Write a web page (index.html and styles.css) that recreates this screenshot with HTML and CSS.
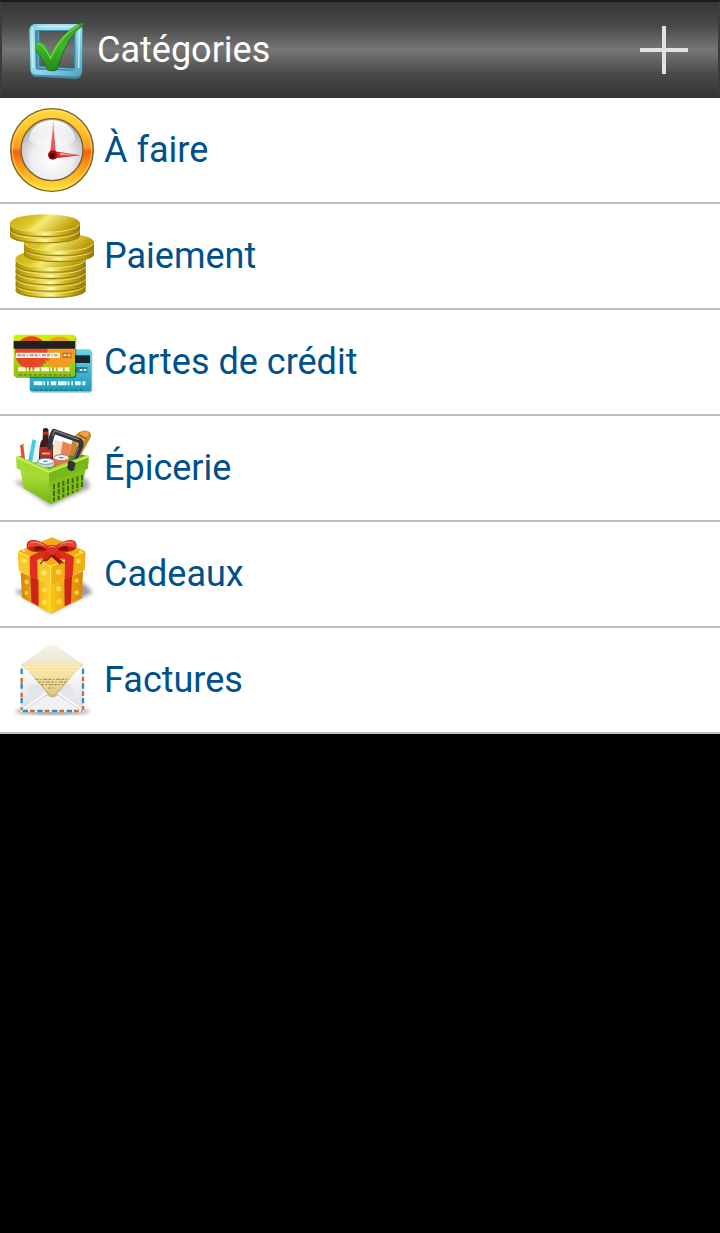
FILE: index.html
```html
<!DOCTYPE html>
<html lang="fr">
    <head>
        <meta charset="utf-8" />
        <meta name="viewport" content="width=device-width, initial-scale=1" />

        <title>Catégories</title>

        <link rel="stylesheet" href="styles.css">
    </head>

    <body>
        <header class="top-bar">
            <svg class="logo" viewBox="21 21 180 180" aria-hidden="true">
                <defs>
                    <linearGradient id="frame" x1="0" y1="0" x2="1" y2="1">
                        <stop offset="0" stop-color="#7fcfe3" />
                        <stop offset=".25" stop-color="#a9e2f0" />
                        <stop offset=".6" stop-color="#8ad2ec" />
                        <stop offset="1" stop-color="#4ea0c0" />
                    </linearGradient>
                    <linearGradient id="tick" x1="0" y1="0" x2="0" y2="1">
                        <stop offset="0" stop-color="#2f9a28" />
                        <stop offset=".5" stop-color="#3fb52c" />
                        <stop offset="1" stop-color="#238a1c" />
                    </linearGradient>
                </defs>
                <path fill="#3f8daa" fill-rule="evenodd" d="M42 34H172Q188 36 187 50V176Q185 194 168 197L44 191Q34 188 32 178L28 52Q28 38 42 34ZM56 54V160L162 166V54Z" />
                <path fill="url(#frame)" fill-rule="evenodd" d="M44 33L172 33Q187 35 187 49L186 170Q184 190 166 190L48 185Q33 184 32 170L28 54Q28 37 44 33ZM48 51Q45 52 45 57L47 164Q47 169 53 170L158 174Q166 174 166 166L167 58Q167 51 160 51Z" />
                <path fill="none" stroke="#5db8d2" stroke-width="3" d="M56 54V162L163 169" />
                <path fill="none" stroke="#c9eff8" stroke-width="4" d="M38 44Q36 48 36 56L39 165M52 41H170M178 50L176 165" />
                <path fill="#176c18" d="M46 96Q54 86 66 92Q80 102 92 128Q116 68 176 34L192 30L188 40Q146 64 112 170Q98 178 82 172Q66 134 46 112Z" />
                <path fill="url(#tick)" d="M45 94Q56 84 68 90Q80 98 92 123Q120 64 174 34L188 29Q192 32 188 38Q140 70 111 165Q104 176 82 170Q68 132 45 108Z" />
                <path fill="none" stroke="#7ad34e" stroke-width="4" stroke-linecap="round" d="M53 94Q67 89 92 136Q120 70 176 38" />
            </svg>
            <h1 class="title">Catégories</h1>
            <button class="add" type="button" aria-label="Ajouter">
                <svg class="plus" viewBox="0 0 48 48" aria-hidden="true">
                    <path fill="#e2e2e2" d="M22 0h4v22h22v4H26v22h-4V26H0v-4h22Z" />
                </svg>
            </button>
        </header>

        <main>
            <ul class="categories">
                <li>
                    <a class="category" href="#a-faire">
                        <!-- Clock -->
                        <svg class="icon" viewBox="30 30 252 252" aria-hidden="true">
                            <defs>
                                <linearGradient id="rim" x1="0" y1="0" x2="0" y2="1">
                                    <stop offset="0" stop-color="#ffd83c" />
                                    <stop offset=".25" stop-color="#ffc42a" />
                                    <stop offset=".47" stop-color="#fb9a20" />
                                    <stop offset=".52" stop-color="#f4600c" />
                                    <stop offset=".7" stop-color="#fb9a18" />
                                    <stop offset="1" stop-color="#ffe83c" />
                                </linearGradient>
                                <radialGradient id="face" cx=".5" cy=".65" r=".6">
                                    <stop offset="0" stop-color="#fff" />
                                    <stop offset=".55" stop-color="#eeeef0" />
                                    <stop offset="1" stop-color="#b4b4b8" />
                                </radialGradient>
                                <linearGradient id="shine" x1="0" y1="0" x2="0" y2="1">
                                    <stop offset="0" stop-color="#fff" />
                                    <stop offset="1" stop-color="#fff" stop-opacity=".3" />
                                </linearGradient>
                            </defs>
                            <circle cx="156" cy="156" r="124" fill="url(#rim)" stroke="#806420" stroke-width="4" />
                            <circle cx="156" cy="156" r="119" fill="none" stroke="#ffe680" stroke-width="3" opacity=".7" />
                            <circle cx="156" cy="155" r="93" fill="url(#face)" stroke="#76602c" stroke-width="4" />
                            <path fill="url(#shine)" d="M87 126Q92 72 156 66Q220 72 226 126Q206 148 156 148Q106 148 87 126Z" />
                            <path fill="#e99" d="M160 66L168 168H150Z" />
                            <path fill="#e03c38" opacity=".7" d="M160 96L168 168H150Z" />
                            <path fill="#e0302c" d="M156 158L242 172L156 182Z" />
                            <path fill="#f49a94" d="M180 164L234 172L180 172Z" />
                            <circle cx="158" cy="171" r="14" fill="#a41010" />
                            <circle cx="157" cy="173" r="8" fill="#4c0808" />
                        </svg>
                        À faire
                    </a>
                </li>
                <li>
                    <a class="category" href="#paiement">
                        <!-- Stack of coins, drawn from the bottom up -->
                        <svg class="icon" viewBox="30 24 252 252" aria-hidden="true">
                            <defs>
                                <linearGradient id="edge">
                                    <stop offset="0" stop-color="#a88c08" />
                                    <stop offset=".25" stop-color="#d6c024" />
                                    <stop offset=".5" stop-color="#fff9a0" />
                                    <stop offset=".7" stop-color="#d4bb20" />
                                    <stop offset="1" stop-color="#927604" />
                                </linearGradient>
                                <linearGradient id="coin-top" x1="0" y1="0" x2="1" y2=".3">
                                    <stop offset="0" stop-color="#c6a80c" />
                                    <stop offset=".4" stop-color="#dcc628" />
                                    <stop offset=".55" stop-color="#f4ec74" />
                                    <stop offset="1" stop-color="#bd9e08" />
                                </linearGradient>
                                <g id="coin">
                                    <path fill="url(#edge)" d="M0 0V18C0 50 210 50 210 18V0Z" />
                                    <path fill="none" stroke="#a08410" stroke-width="4" d="M1 18C1 48 209 48 209 18" />
                                    <ellipse cx="105" cy="0" rx="105" ry="26" fill="url(#coin-top)" />
                                    <path fill="none" stroke="#eee070" stroke-width="3" d="M2 5C12 35 198 35 208 5" />
                                </g>
                            </defs>
                            <use href="#coin" x="47" y="234" />
                            <use href="#coin" x="47" y="215" />
                            <use href="#coin" x="47" y="196" />
                            <use href="#coin" x="47" y="177" />
                            <use href="#coin" x="47" y="158" />
                            <use href="#coin" x="72" y="126" />
                            <use href="#coin" x="72" y="108" />
                            <use href="#coin" x="30" y="70" />
                            <use href="#coin" x="30" y="51" />
                        </svg>
                        Paiement
                    </a>
                </li>
                <li>
                    <a class="category" href="#cartes-de-credit">
                        <!-- Two credit cards -->
                        <svg class="icon" viewBox="30 24 252 252" aria-hidden="true">
                            <defs>
                                <linearGradient id="lime" x1="0" y1="0" x2="0" y2="1">
                                    <stop offset="0" stop-color="#d6ec08" />
                                    <stop offset="1" stop-color="#8ec018" />
                                </linearGradient>
                                <linearGradient id="blue" x1="0" y1="0" x2="0" y2="1">
                                    <stop offset="0" stop-color="#68d4e6" />
                                    <stop offset="1" stop-color="#1c9cb8" />
                                </linearGradient>
                                <clipPath id="card">
                                    <rect x="41" y="68" width="184" height="126" rx="8" />
                                </clipPath>
                            </defs>
                            <rect x="92" y="116" width="185" height="126" rx="8" fill="#000" opacity=".25" />
                            <rect x="89" y="112" width="185" height="126" rx="8" fill="url(#blue)" />
                            <path fill="#16282c" d="M200 130h70v23h-70Z" />
                            <path fill="#287f90" d="M226 165h36v17h-36Z" />
                            <path fill="none" stroke="#d8f4f8" stroke-width="6" stroke-dasharray="8 4" d="M239 174h20" />
                            <path fill="none" stroke="#e6fbff" stroke-width="12" stroke-dasharray="26 3 5 6 5 6 17 5" d="M101 214h155" />
                            <path fill="none" stroke="#177790" stroke-width="4" stroke-dasharray="9 6" d="M104 234h150" />
                            <rect x="45" y="72" width="184" height="126" rx="8" fill="#000" opacity=".35" />
                            <rect x="41" y="68" width="184" height="126" rx="8" fill="url(#lime)" />
                            <g clip-path="url(#card)">
                                <circle cx="178" cy="122" r="48" fill="#f59b22" />
                                <circle cx="94" cy="122" r="49" fill="#e84428" />
                                <path fill="none" stroke="#e8502a" stroke-width="5" d="M110 143h38M110 152h29M110 161h19" />
                            </g>
                            <path fill="#20201e" d="M41 87h184v23H41Z" />
                            <path fill="#fff3e4" d="M47 122h133v16H47Z" />
                            <path fill="none" stroke="#a89a8c" stroke-width="6" stroke-dasharray="12 3 9 5 3 5" d="M52 130h120" />
                            <path fill="#b57830" d="M187 122h28v16h-28Z" />
                            <path fill="none" stroke="#ffe3b8" stroke-width="6" stroke-dasharray="8 4" d="M191 130h20" />
                            <path fill="none" stroke="#fff3d0" stroke-width="12" stroke-dasharray="23 4 5 6 5 6 16 5" d="M54 172h154" />
                            <path fill="none" stroke="#668c14" stroke-width="4" stroke-dasharray="9 6" d="M56 189h156" />
                        </svg>
                        Cartes de crédit
                    </a>
                </li>
                <li>
                    <a class="category" href="#epicerie">
                        <!-- Shopping basket -->
                        <svg class="icon" viewBox="30 24 252 252" aria-hidden="true">
                            <defs>
                                <linearGradient id="basket" x1="0" y1="0" x2="0" y2="1">
                                    <stop offset="0" stop-color="#b4e43c" />
                                    <stop offset="1" stop-color="#75b414" />
                                </linearGradient>
                                <filter id="soft" x="-20%" y="-50%" width="140%" height="200%">
                                    <feGaussianBlur stdDeviation="6" />
                                </filter>
                            </defs>
                            <path fill="#000" opacity=".35" filter="url(#soft)" d="M42 190L150 265L270 210L260 180Z" />
                            <path fill="#5c8c18" d="M50 119L150 78L266 116L148 165Z" />
                            <path fill="#e64c2c" d="M60 82L72 78L84 130L66 126Z" />
                            <path fill="#fff" d="M70 82L82 75L90 130H76Z" />
                            <path fill="#e4f8fc" d="M82 84L98 64L118 70L122 134L84 132Z" />
                            <path fill="#4cc4e4" d="M98 64L108 68L96 134L84 132Z" />
                            <path fill="#c8862c" d="M202 110L222 58Q236 36 262 38Q278 44 271 60L238 120Z" />
                            <path fill="#f0a648" d="M224 62Q240 38 262 40Q272 46 260 56L234 94Z" />
                            <path fill="none" stroke="#8c4e14" stroke-width="4" d="M236 50l22 12M228 64l20 12" />
                            <path fill="#f8e4cc" d="M164 66L206 74L196 124H152Z" />
                            <path fill="#ed8454" d="M188 70L218 82L204 122H180Z" />
                            <path fill="#3c1c18" d="M129 33Q137 27 145 33L146 64Q158 74 159 94V130H116L119 88Q120 72 128 64Z" />
                            <path fill="#ba3024" d="M129 41h16v9h-16ZM120 87h37v32h-37Z" />
                            <path fill="#f4b49c" d="M126 104h24v5h-24Z" />
                            <path fill="#c8d4da" d="M111 130Q136 114 162 130V144Q138 154 111 142Z" />
                            <ellipse cx="137" cy="130" rx="25" ry="9" fill="#f4f8fa" stroke="#7098ac" stroke-width="3" />
                            <path fill="#f3714a" d="M160 120Q182 104 207 120V136L164 144Z" />
                            <ellipse cx="184" cy="119" rx="23" ry="9" fill="#f8f0ec" stroke="#a47c70" stroke-width="3" />
                            <path fill="#2c98bc" d="M130 128h12v4h-12ZM178 117h12v4h-12Z" />
                            <path fill="none" stroke="#34363e" stroke-width="15" stroke-linecap="round" stroke-linejoin="round" d="M149 88Q152 55 162 40L240 68Q248 76 238 94L215 148" />
                            <path fill="none" stroke="#787a86" stroke-width="4" stroke-linecap="round" d="M158 52L164 38L236 65M235 90L216 134" />
                            <path fill="url(#basket)" d="M60 151L147 190L154 259L71 211Z" />
                            <path fill="#82bf1c" d="M147 190L257 154L244 216L154 259Z" />
                            <path fill="#a4da34" d="M48 117L56 114L146 153L260 111L266 116L264 152L147 193L50 151Z" />
                            <path fill="#78b818" d="M147 163L266 117L264 152L147 193Z" />
                            <path fill="none" stroke="#d4f468" stroke-width="4" d="M50 118L147 162L265 116" />
                            <path fill="none" stroke="#426c0c" stroke-width="6" stroke-dasharray="16 4" d="M162 198V250M176 193V245M190 188V238M204 183V232M218 179V226M232 175V220M246 171V211" />
                            <path fill="#30323a" d="M204 130Q216 124 227 136L222 157Q211 164 202 151Z" />
                        </svg>
                        Épicerie
                    </a>
                </li>
                <li>
                    <a class="category" href="#cadeaux">
                        <!-- Gift box -->
                        <svg class="icon" viewBox="30 24 252 252" aria-hidden="true">
                            <defs>
                                <linearGradient id="gold">
                                    <stop offset="0" stop-color="#d88408" />
                                    <stop offset="1" stop-color="#ffd728" />
                                </linearGradient>
                                <linearGradient id="gold-side">
                                    <stop offset="0" stop-color="#f8c818" />
                                    <stop offset="1" stop-color="#dc8404" />
                                </linearGradient>
                            </defs>
                            <path fill="#000" opacity=".4" filter="url(#soft)" d="M42 200L152 268L278 206L250 176Z" />
                            <path fill="url(#gold)" d="M62 144L153 182L154 269L66 221Z" />
                            <path fill="url(#gold-side)" d="M153 182L249 142L246 222L154 269Z" />
                            <g fill="#ffe85c" opacity=".65">
                                <circle cx="80" cy="174" r="7" />
                                <circle cx="132" cy="198" r="8" />
                                <circle cx="79" cy="207" r="6" />
                                <circle cx="132" cy="235" r="8" />
                                <circle cx="176" cy="194" r="8" />
                                <circle cx="178" cy="233" r="8" />
                                <circle cx="230" cy="170" r="7" />
                                <circle cx="230" cy="206" r="7" />
                            </g>
                            <path fill="#cc2418" d="M91 150L115 160L116 247L94 235ZM193 160L216 150L213 238L194 247Z" />
                            <path fill="#f0ac14" d="M54 82L156 40L257 82L152 132Z" />
                            <path fill="#f8c928" d="M53 82L152 125L153 183L56 140Z" />
                            <path fill="#f0b010" d="M152 125L257 80L254 139L153 183Z" />
                            <path fill="none" stroke="#fff06c" stroke-width="3" d="M54 83L152 127L256 82M152 127V180" />
                            <g fill="#fff280" opacity=".65">
                                <circle cx="73" cy="111" r="7" />
                                <circle cx="132" cy="146" r="8" />
                                <circle cx="176" cy="144" r="8" />
                                <circle cx="235" cy="112" r="7" />
                                <circle cx="72" cy="80" r="5" />
                                <circle cx="241" cy="83" r="5" />
                            </g>
                            <path fill="#df2e20" d="M89 98L132 76L150 86L112 107L113 165L90 155ZM222 98L178 76L158 86L195 106L194 166L218 156Z" />
                            <path fill="#8c140c" d="M119 119L144 91H164L194 119L182 116L181 124L168 110L154 98L142 111L128 112L124 121Z" />
                            <path fill="#d42419" d="M142 80L122 106L134 103L137 111L158 86L180 110L182 102L193 108L170 78Z" />
                            <path fill="#c81c14" d="M148 80Q122 42 91 49Q79 54 80 68Q85 84 111 84Z" />
                            <path fill="#e84430" d="M146 66Q111 43 90 51Q80 59 84 72Q104 60 146 78Z" />
                            <path fill="#84150e" d="M104 68Q122 62 142 77L114 80Q98 79 104 68Z" />
                            <path fill="#c81c14" d="M160 80Q190 42 219 49Q231 54 230 68Q225 82 199 84Z" />
                            <path fill="#e84430" d="M164 66Q200 43 221 51Q230 59 227 72Q205 60 164 78Z" />
                            <path fill="#84150e" d="M204 68Q187 62 169 77L197 80Q210 79 204 68Z" />
                            <path fill="#db3022" d="M140 67Q156 57 173 67L176 82Q157 96 139 83Z" />
                            <path fill="none" stroke="#f68c70" stroke-width="3" stroke-linecap="round" d="M93 57Q108 50 130 63M182 61Q202 50 218 57M147 69Q156 65 165 69" />
                        </svg>
                        Cadeaux
                    </a>
                </li>
                <li>
                    <a class="category" href="#factures">
                        <!-- Open envelope -->
                        <svg class="icon" viewBox="30 24 252 252" aria-hidden="true">
                            <defs>
                                <linearGradient id="flap" x1="0" y1="0" x2="0" y2="1">
                                    <stop offset="0" stop-color="#f4f2e8" />
                                    <stop offset="1" stop-color="#e8e2c8" />
                                </linearGradient>
                                <linearGradient id="letter" x1="0" y1="0" x2="0" y2="1">
                                    <stop offset="0" stop-color="#fff0b8" />
                                    <stop offset="1" stop-color="#e4c880" />
                                </linearGradient>
                                <linearGradient id="paper" x1="0" y1="0" x2="0" y2="1">
                                    <stop offset="0" stop-color="#fff" />
                                    <stop offset="1" stop-color="#dcdde2" />
                                </linearGradient>
                            </defs>
                            <ellipse cx="157" cy="244" rx="112" ry="7" fill="#000" opacity=".6" filter="url(#soft)" />
                            <path fill="url(#flap)" d="M62 104L140 50Q156 41 172 50L252 104L246 120H66Z" />
                            <path fill="url(#paper)" d="M62 105L156 190L251 105V247H62Z" />
                            <circle cx="105" cy="184" r="22" fill="#e4e5e9" />
                            <circle cx="198" cy="182" r="22" fill="#e4e5e9" />
                            <path fill="#b4b5bb" opacity=".7" d="M66 242L137 190L157 202L177 190L249 242Z" />
                            <path fill="#f1f1f4" d="M68 244L139 196Q157 207 175 196L247 244Z" />
                            <path fill="none" stroke="#fff" stroke-width="5" d="M68 239L141 189M246 239L174 189" />
                            <path fill="#c8ba90" d="M70 104H244L166 199Q157 206 148 199Z" />
                            <path fill="url(#letter)" d="M75 101H239L242 108L165 191Q157 198 149 191L72 108Z" />
                            <path fill="none" stroke="#f5dda0" stroke-width="3" d="M78 106H237M83 116H231M91 126H222" />
                            <path fill="none" stroke="#a08858" stroke-width="3" stroke-dasharray="9 4 5 5 13 3" d="M106 148H208M114 156H199M123 164H190M144 174H168" />
                            <path fill="none" stroke="#e4edf4" stroke-width="6" d="M65 110V244H249V110" />
                            <path fill="none" stroke="#2f8dca" stroke-width="7" stroke-dasharray="16 28" d="M65 116V244M249 116V244M68 243H247" />
                            <path fill="none" stroke="#d46c32" stroke-width="7" stroke-dasharray="14 30" d="M65 144V240M249 140V240M90 243H247" />
                        </svg>
                        Factures
                    </a>
                </li>
            </ul>
        </main>
    </body>
</html>
```
FILE: styles.css
```css
body {
    margin: 0;
    font-family: Roboto, "Noto Sans", sans-serif;
    background: #000;
}

.top-bar {
    display: flex;
    align-items: center;
    box-sizing: border-box;
    height: 98px;
    padding: 0 32px 0 27px;
    border-top: 2px solid #1c1c1c;
    background: linear-gradient(#353535, #4a4a4a 25%, #767676 50%, #4a4a4a 75%, #333);
    box-shadow: inset 2px 0 #3c3c3c, inset -2px 0 #3c3c3c;
}

.logo {
    width: 60px;
    height: 60px;
}

.title {
    flex: 1;
    margin: 0;
    padding-left: 10px;
    font-size: 36px;
    font-weight: 400;
    line-height: 48px;
    color: #fff;
}

.add {
    padding: 0;
    border: 0;
    background: none;
    cursor: pointer;
}

.plus {
    display: block;
    width: 48px;
    height: 48px;
}

.categories {
    margin: 0;
    padding: 0;
    list-style: none;
    background: #fff;
}

.category {
    display: flex;
    align-items: center;
    gap: 10px;
    padding: 10px;
    border-bottom: 2px solid #bebebe;
    font-size: 36px;
    line-height: 48px;
    color: #00508c;
    text-decoration: none;
}

.icon {
    flex: none;
    width: 84px;
    height: 84px;
}
```
